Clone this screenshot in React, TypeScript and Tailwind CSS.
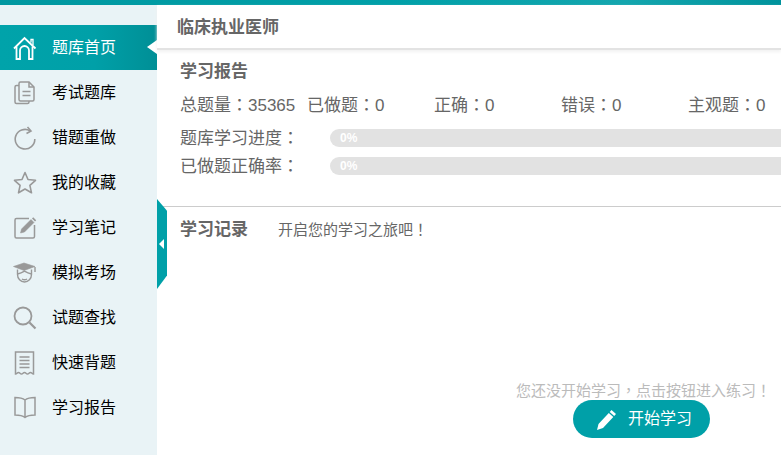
const font = 'font-["Liberation_Sans","Noto_Sans_CJK_SC",sans-serif]'

const iconProps = {
  width: 24,
  height: 24,
  viewBox: '0 0 24 24',
  fill: 'none',
  stroke: 'currentColor',
  strokeWidth: 1.5,
}

const HomeIcon = () => (
  <svg {...iconProps} strokeWidth={1.8}>
    <path d="M1 12.500 11.500 2 22.500 12.500" />
    <path d="M3.500 10.500V23h3.500V14.500a4.500 4.500 0 0 1 9 0V23h3.500V10.500" />
    <path d="M18 6.500V3.500h2V9" strokeWidth={1.3} />
  </svg>
)
const PaperIcon = () => (
  <svg {...iconProps}>
    <path d="M6 4.500H3.500A1.500 1.500 0 0 0 2 6v15A1.500 1.500 0 0 0 3.500 22.500h11A1.500 1.500 0 0 0 16 21v-1" />
    <path d="M7.500 1H16l5 5v12.500A1.500 1.500 0 0 1 19.500 20H7.500A1.500 1.500 0 0 1 6 18.500V2.500A1.500 1.500 0 0 1 7.500 1Z" />
    <path d="M16 1v5h5M9.500 10.500h8M9.500 14.500h8" />
  </svg>
)
const RedoIcon = () => (
  <svg {...iconProps} strokeWidth={1.6}>
    <path d="M17 4.800A9.800 9.800 0 1 0 21.800 13" />
    <path d="M14.500 1 18 5l-4.500 2.500" />
  </svg>
)
const StarIcon = () => (
  <svg {...iconProps} strokeWidth={1.6}>
    <path d="m12 1.500 3 7 7.500.8-5.600 5 1.600 7.500L12 18l-6.500 3.800 1.600-7.500-5.600-5L9 8.500Z" strokeLinejoin="round" />
  </svg>
)
const NoteIcon = () => (
  <svg {...iconProps}>
    <path d="M16 2.500H3.500A1.500 1.500 0 0 0 2 4v16.500A1.500 1.500 0 0 0 3.500 22h16.500a1.500 1.500 0 0 0 1.500-1.500V9" />
    <path d="m7.500 17 1-4L18 3.500l3 3-9.500 9.500Z" fill="currentColor" strokeWidth={0.5} />
    <path d="m19 2.500 3 3 1.200-1.300-3-3Z" fill="currentColor" stroke="none" />
  </svg>
)
const CapIcon = () => (
  <svg {...iconProps} strokeWidth={1.4}>
    <path d="M11 2 0.500 5.500 11 9.500l11-4Z" fill="currentColor" strokeWidth={0.6} />
    <path d="M4.500 8.500v5a7 7.500 0 0 0 14 0v-5" />
    <path d="M4.500 13c3-.5 5-1.500 7-2.800 2 1.300 4 2.300 7 2.800" />
    <path d="M9 18c1.500 1 3.500 1 5 0M22 6v5" />
  </svg>
)
const SearchIcon = () => (
  <svg {...iconProps} strokeWidth={1.8}>
    <circle cx="10" cy="10" r="8.500" />
    <path d="m16.500 16.500 6 6" strokeWidth={2.2} />
  </svg>
)
const ReceiptIcon = () => (
  <svg {...iconProps}>
    <path d="M2.500 1h18v22c-1.500 0-1.500-1.500-3-1.500s-1.500 1.500-3 1.500-1.500-1.500-3-1.500-1.500 1.500-3 1.500-1.500-1.500-3-1.500-1.500 1.500-3 1.500Z" />
    <path d="M6.500 6h10M6.500 9.500h10M6.500 13h10M6.500 16.500h10" />
  </svg>
)
const BookIcon = () => (
  <svg {...iconProps}>
    <path d="M12 4C9.500 2 6 1.500 2 1.500V19c4 0 7.500.5 10 2.500 2.500-2 6-2.500 10-2.500V1.500c-4 0-7.500.5-10 2.500Zm0 0v17.500" />
  </svg>
)

const navItems = [
  { label: '题库首页', icon: HomeIcon },
  { label: '考试题库', icon: PaperIcon },
  { label: '错题重做', icon: RedoIcon },
  { label: '我的收藏', icon: StarIcon },
  { label: '学习笔记', icon: NoteIcon },
  { label: '模拟考场', icon: CapIcon },
  { label: '试题查找', icon: SearchIcon },
  { label: '快速背题', icon: ReceiptIcon },
  { label: '学习报告', icon: BookIcon },
]

// full-width punctuation sits centered in the reference, TC glyphs do that
const Punct = ({ children }: { children: string }) => (
  <span className='font-["Noto_Sans_CJK_TC",sans-serif]'>{children}</span>
)

const stats = [
  { label: '总题量', value: '35365' },
  { label: '已做题', value: '0' },
  { label: '正确', value: '0' },
  { label: '错误', value: '0' },
  { label: '主观题', value: '0' },
]

const progress = [
  { label: '题库学习进度', value: '0%' },
  { label: '已做题正确率', value: '0%' },
]

export default function App() {
  return (
    <div className={`${font} flex h-[455px] w-[781px] flex-col overflow-hidden bg-white`}>
      {/* top strip */}
      <div className="h-[5px] shrink-0 bg-[linear-gradient(90deg,#0097a0_0%,#00a0a8_50%,#14a6ae_80%,#00939c_100%)]" />

      <div className="flex min-h-0 flex-1">
        <aside className="w-[157px] shrink-0 bg-[#e9f3f6] pt-[20px]">
          {navItems.map((item, idx) => {
            const Icon = item.icon
            const active = idx === 0
            return (
              <div
                key={item.label}
                className={`relative flex h-[45px] items-center pl-[13px] text-[16px] ${
                  active
                    ? 'bg-[linear-gradient(90deg,#00a3aa_0%,#00a0a8_60%,#008f96_100%)] text-white'
                    : 'text-black'
                }`}
              >
                <span className={active ? 'text-white' : 'text-[#999]'}>
                  <Icon />
                </span>
                <span className="ml-[15px]">{item.label}</span>
                {active && (
                  <span className="absolute right-0 top-[15px] h-0 w-0 border-y-[7px] border-r-[10px] border-y-transparent border-r-white" />
                )}
              </div>
            )
          })}
        </aside>

        <main className="relative min-w-0 flex-1 text-[#666]">
          <div className="flex h-[45px] items-center border-b-2 border-[#e3e3e3] pl-[20px] pt-[3px] text-[17px] font-bold shadow-[0_2px_3px_#f2f2f2]">
            临床执业医师
          </div>

          <section className="h-[157px] border-b border-[#ccc] pl-[23px] pt-[10px]">
            <h2 className="text-[17px] font-bold leading-[24px]">学习报告</h2>
            <div className="mt-[8px] flex h-[24px] text-[17px] leading-[24px] whitespace-nowrap">
              {stats.map((stat) => (
                <span key={stat.label} className="w-[127px] shrink-0">
                  {stat.label}
                  <Punct>：</Punct>
                  {stat.value}
                </span>
              ))}
            </div>
            <div className="mt-[13px] flex flex-col gap-[10px]">
              {progress.map((row) => (
                <div key={row.label} className="flex h-[18px] items-center">
                  <span className="w-[150px] shrink-0 text-[17px]">
                    {row.label}
                    <Punct>：</Punct>
                  </span>
                  <div className="flex h-[18px] w-[600px] shrink-0 items-center rounded-full bg-[#e2e2e2] pl-[10px] text-[12px] font-bold text-white">
                    {row.value}
                  </div>
                </div>
              ))}
            </div>
          </section>

          <section className="flex items-center pl-[23px] pt-[11px]">
            <h2 className="w-[98px] text-[17px] font-bold leading-[22px]">学习记录</h2>
            <span className="text-[15px] leading-[22px]">
              开启您的学习之旅吧<Punct>！</Punct>
            </span>
          </section>

          {/* collapse tab */}
          <div className="absolute left-0 top-[194px] flex h-[90px] w-[10px] items-center bg-[#00a0a8] [clip-path:polygon(0_0,100%_13%,100%_85%,0_100%)]">
            <span className="ml-[2px] h-0 w-0 border-y-[5px] border-r-[5px] border-y-transparent border-r-white" />
          </div>

          <div className="absolute bottom-[17px] right-[10px] flex flex-col items-end">
            <p className="text-[15px] leading-[18px] text-[#bbb]">
              您还没开始学习<Punct>，</Punct>点击按钮进入练习<Punct>！</Punct>
            </p>
            <button className="mr-[61px] flex h-[38px] w-[137px] items-center rounded-full bg-[#00a0a8] pl-[23px] text-[16px] text-white">
              <svg width="21" height="21" viewBox="0 0 21 21" fill="currentColor">
                <path d="M15.500 1 20 5l-1.800 2-4.500-4ZM12.800 4l4.500 4L7 19 1 21l1.500-6Z" />
              </svg>
              <span className="ml-[11px]">开始学习</span>
            </button>
          </div>
        </main>
      </div>
    </div>
  )
}
